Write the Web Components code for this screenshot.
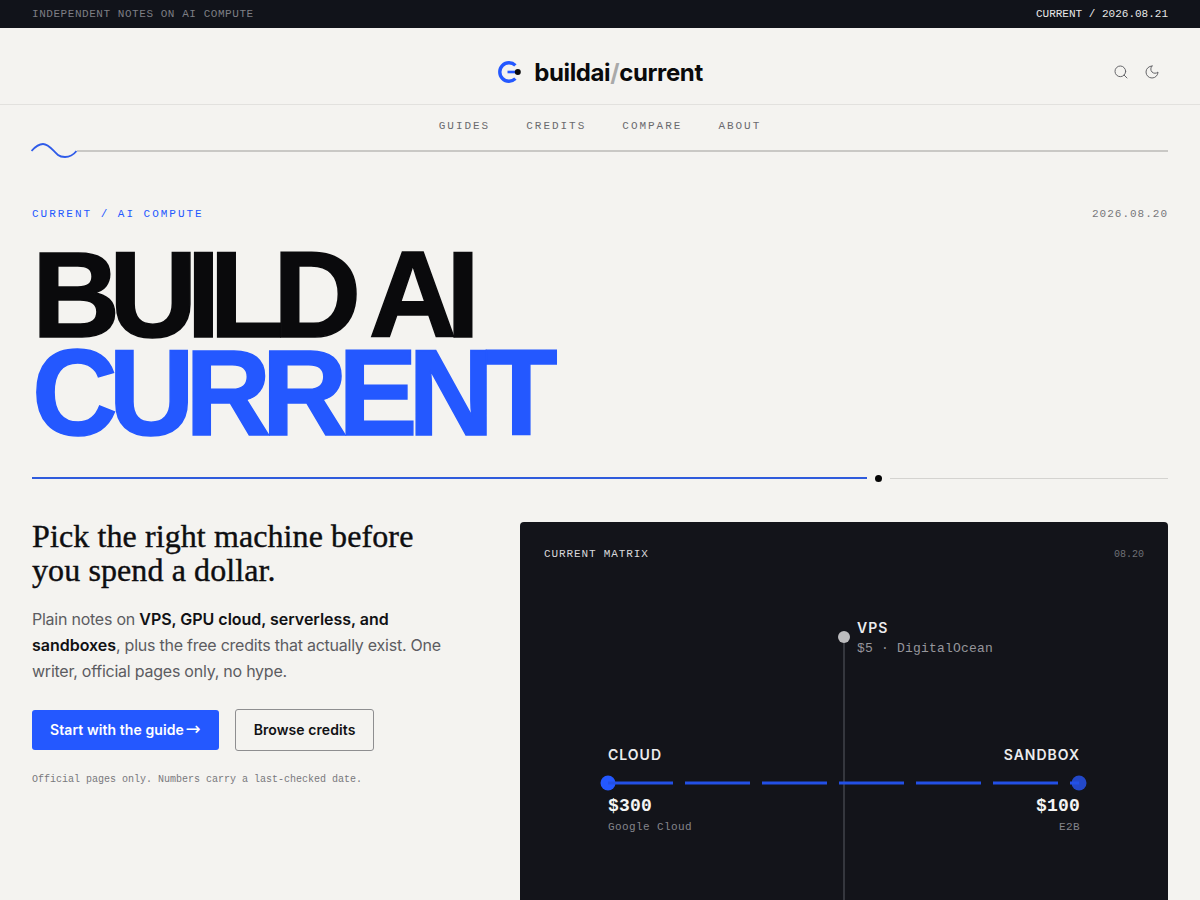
<!DOCTYPE html>
<html lang="en">
<head>
<meta charset="utf-8">
<title>buildai/current</title>
<style>
  html, body { margin: 0; background: #f4f3f0; }
  body { height: 900px; overflow: hidden; font-family: Inter, "Liberation Sans", sans-serif; color: #0a0a0c; }
</style>
</head>
<body>
<top-bar></top-bar>
<site-header></site-header>
<site-nav></site-nav>
<main-hero></main-hero>
<script>
const MONO = `"Liberation Mono", monospace`;

class TopBar extends HTMLElement {
  constructor() {
    super();
    this.attachShadow({ mode: 'open' });
    this.shadowRoot.innerHTML = `
      <style>
        :host {
          display: flex;
          justify-content: space-between;
          align-items: center;
          height: 28px;
          padding: 0 32px;
          background: #11131a;
          font: 11px ${MONO};
        }
        .left { color: #7d7e84; letter-spacing: 0.55px; }
        .right { color: #e8e8e8; }
      </style>
      <span class="left">INDEPENDENT NOTES ON AI COMPUTE</span>
      <span class="right">CURRENT / 2026.08.21</span>
    `;
  }
}

class SiteHeader extends HTMLElement {
  constructor() {
    super();
    this.attachShadow({ mode: 'open' });
    this.shadowRoot.innerHTML = `
      <style>
        :host {
          display: grid;
          grid-template-columns: 1fr auto 1fr;
          align-items: center;
          box-sizing: content-box;
          height: 64px;
          padding: 12px 32px 0;
          border-bottom: 1px solid #e2e1de;
        }
        .logo { grid-column: 2; display: flex; align-items: center; gap: 12px; }
        .word { font: 700 24px Inter, sans-serif; letter-spacing: -0.37px; color: #0a0a0c; }
        .word i { font-style: normal; color: #a9a9a9; }
        .tools { display: flex; justify-content: flex-end; gap: 15px; margin-right: 8px; }
        svg.tool { display: block; width: 16px; height: 16px; fill: none; stroke: #66666a; stroke-width: 1.5; stroke-linecap: round; stroke-linejoin: round; }
      </style>
      <div class="logo">
        <svg width="25" height="24" viewBox="0 0 25 24" fill="none">
          <path d="M18.4 5.4 A9.2 9.2 0 1 0 18.4 18.6" stroke="#2458ff" stroke-width="3.4"/>
          <path d="M10.5 12 H20" stroke="#2458ff" stroke-width="2.6"/>
          <circle cx="20.8" cy="12" r="3" fill="#0a0a0c"/>
        </svg>
        <span class="word">buildai<i>/</i>current</span>
      </div>
      <div class="tools">
        <svg class="tool" viewBox="0 0 24 24"><circle cx="11" cy="11" r="8"/><path d="m21 21-4.3-4.3"/></svg>
        <svg class="tool" viewBox="0 0 24 24"><path d="M12 3a6 6 0 0 0 9 9 9 9 0 1 1-9-9Z"/></svg>
      </div>
    `;
  }
}

class SiteNav extends HTMLElement {
  constructor() {
    super();
    this.attachShadow({ mode: 'open' });
    this.shadowRoot.innerHTML = `
      <style>
        :host { display: block; padding: 0 32px; }
        nav {
          display: flex;
          justify-content: center;
          gap: 36px;
          padding-top: 15px;
          height: 23px;
          font: 11px/13px ${MONO};
          letter-spacing: 1.98px;
          color: #6a6a6e;
        }
        .track { display: flex; align-items: center; height: 14px; margin-top: 1px; }
        .track svg { display: block; flex: none; margin-left: -1px; }
        .track div { flex: 1; height: 2px; background: #c9c8c5; }
      </style>
      <nav>
        <span>GUIDES</span><span>CREDITS</span><span>COMPARE</span><span>ABOUT</span>
      </nav>
      <div class="track">
        <svg width="46" height="16" viewBox="0 0 46 16" fill="none">
          <path d="M0.5 8 C4 4 8 1 12 1 C18 1 22 8 27 12 C29 13.6 31 14 34 14 C38 14 42 12.5 45.5 8" stroke="#2f5be8" stroke-width="1.8"/>
        </svg>
        <div></div>
      </div>
    `;
  }
}

class MainHero extends HTMLElement {
  constructor() {
    super();
    this.attachShadow({ mode: 'open' });
    this.shadowRoot.innerHTML = `
      <style>
        :host { display: block; padding: 49px 32px 0; }
        .meta { display: flex; justify-content: space-between; font: 11px/14px ${MONO}; }
        .eyebrow { color: #2458ff; letter-spacing: 1.98px; }
        .date { color: #77777b; letter-spacing: 1px; }
        h1 {
          margin: 25px 0 0;
          font: 700 122px/98px "Liberation Sans", Arial, sans-serif;
          letter-spacing: -10.9px;
          -webkit-text-stroke: 1.5px currentColor;
          color: #0a0a0c;
        }
        h1 span { display: block; }
        /* narrower than the real cut, so squeeze instead of overlapping the R legs */
        h1 .blue { color: #2458ff; letter-spacing: -9.5px; transform: scaleX(0.974); transform-origin: 4px 0; }
        .rule { display: flex; align-items: center; gap: 8px; margin-top: 32px; height: 8px; }
        .rule .a { width: 835px; height: 2px; background: #2f5bdc; }
        .rule .dot { width: 7px; height: 7px; border-radius: 50%; background: #050505; }
        .rule .b { flex: 1; height: 1px; background: #d4d3d0; }
        .cols { display: grid; grid-template-columns: 440px 1fr; gap: 48px; margin-top: 40px; align-items: start; }
        h2 { margin: -3px 0 0; max-width: 420px; font: 400 32px/34px "Liberation Serif", serif; letter-spacing: 0.1px; color: #0e0e10; -webkit-text-stroke: 0.4px #0e0e10; }
        p { margin: 19px 0 0; font-size: 16px; line-height: 26px; letter-spacing: -0.24px; color: #5c5c61; }
        p b { font-weight: 600; letter-spacing: -0.02px; color: #111114; }
        .actions { display: flex; align-items: center; gap: 16px; margin-top: 25px; }
        small { display: block; margin-top: 22px; font: 10px/13px ${MONO}; color: #78787c; }
      </style>
      <div class="meta">
        <span class="eyebrow">CURRENT / AI COMPUTE</span>
        <span class="date">2026.08.20</span>
      </div>
      <h1><span>BUILD AI</span><span class="blue">CURRENT</span></h1>
      <div class="rule"><div class="a"></div><div class="dot"></div><div class="b"></div></div>
      <div class="cols">
        <div>
          <h2>Pick the right machine before you spend a dollar.</h2>
          <p>Plain notes on <b>VPS, GPU cloud, serverless, and</b> <b>sandboxes</b>, plus the free credits that actually exist. One writer, official pages only, no hype.</p>
          <div class="actions">
            <link-btn primary>Start with the guide <span style="font:400 18px/0 'DejaVu Sans',sans-serif;margin-left:-2px">→</span></link-btn>
            <link-btn>Browse credits</link-btn>
          </div>
          <small>Official pages only. Numbers carry a last-checked date.</small>
        </div>
        <current-matrix></current-matrix>
      </div>
    `;
  }
}

class LinkBtn extends HTMLElement {
  constructor() {
    super();
    this.attachShadow({ mode: 'open' });
    this.shadowRoot.innerHTML = `
      <style>
        :host {
          display: inline-block;
          height: 40px;
          padding: 0 18px;
          border: 1px solid #8e8e90;
          border-radius: 3px;
          font: 600 14px/40px Inter, sans-serif;
          letter-spacing: 0.08px;
          white-space: nowrap;
          color: #111114;
        }
        :host([primary]) {
          border: 0;
          background: #2458ff;
          color: #fff;
        }
      </style>
      <slot></slot>
    `;
  }
}

class CurrentMatrix extends HTMLElement {
  constructor() {
    super();
    this.attachShadow({ mode: 'open' });
    this.shadowRoot.innerHTML = `
      <style>
        :host {
          display: block;
          position: relative;
          height: 440px;
          border-radius: 4px;
          background: #13141a;
          font-family: ${MONO};
          overflow: hidden;
        }
        .head { display: flex; justify-content: space-between; align-items: center; padding: 26px 24px 0; line-height: 13px; }
        .head span:first-child { font-size: 11px; color: #d8d8da; letter-spacing: 0.88px; }
        .head span:last-child { font-size: 10px; color: #6f7076; }
        svg { position: absolute; left: 0; top: 0; }
        .node { position: absolute; }
        .name { font: 600 14px/18px Inter, sans-serif; letter-spacing: 1px; color: #ececee; }
        .price { font: 700 18px/24px ${MONO}; letter-spacing: 0.2px; color: #f4f4f4; margin-top: 30px; }
        .sub { font-size: 11px; line-height: 14px; letter-spacing: 0.4px; color: #85858b; margin-top: 2px; }
        .vps .sub { font-size: 13px; line-height: 16px; letter-spacing: 0.2px; color: #96969c; margin-top: 4px; }
        .right { text-align: right; }
      </style>
      <div class="head"><span>CURRENT MATRIX</span><span>08.20</span></div>
      <svg width="648" height="440" viewBox="0 0 648 440" fill="none">
        <line x1="324" y1="115" x2="324" y2="440" stroke="#35373e" stroke-width="2"/>
        <circle cx="324" cy="115" r="6" fill="#bcbcbe"/>
        <circle cx="88" cy="261" r="7.5" fill="#2458ff"/>
        <circle cx="559" cy="261" r="7.5" fill="#2348c8"/>
        <line x1="88" y1="261" x2="559" y2="261" stroke="#2350e6" stroke-width="3" stroke-dasharray="65 12"/>
      </svg>
      <div class="node vps" style="left:337px;top:97px"><div class="name">VPS</div><div class="sub">$5 · DigitalOcean</div></div>
      <div class="node" style="left:88px;top:224px"><div class="name">CLOUD</div><div class="price">$300</div><div class="sub">Google Cloud</div></div>
      <div class="node right" style="right:88px;top:224px"><div class="name">SANDBOX</div><div class="price">$100</div><div class="sub">E2B</div></div>
    `;
  }
}

customElements.define('top-bar', TopBar);
customElements.define('site-header', SiteHeader);
customElements.define('site-nav', SiteNav);
customElements.define('link-btn', LinkBtn);
customElements.define('current-matrix', CurrentMatrix);
customElements.define('main-hero', MainHero);
</script>
</body>
</html>
